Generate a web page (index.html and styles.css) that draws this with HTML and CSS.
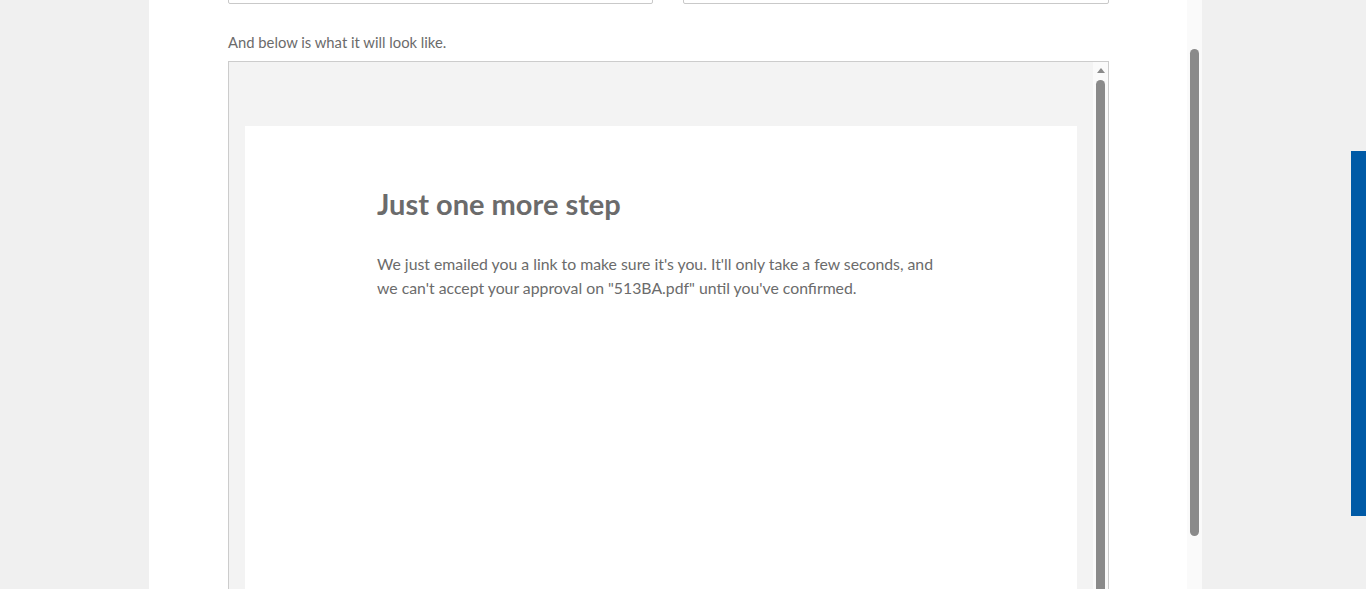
FILE: index.html
```html
<!DOCTYPE html>
<html>
<head>
<meta charset="utf-8">
<link rel="stylesheet" href="styles.css">
</head>
<body>
<div class="viewport">
  <div class="column">
    <div class="page">
      <div class="inputs">
        <div class="field"></div>
        <div class="field field-wide"></div>
      </div>
      <p class="label">And below is what it will look like.</p>
      <div class="preview">
        <div class="preview-body">
          <div class="card">
            <h1 class="title">Just one more step</h1>
            <p class="message">We just emailed you a link to make sure it's you. It'll only take a few seconds, and we can't accept your approval on "513BA.pdf" until you've confirmed.</p>
          </div>
        </div>
        <div class="inner-scroll">
          <div class="arrow-up"></div>
          <div class="inner-thumb"></div>
        </div>
      </div>
    </div>
    <div class="outer-scroll">
      <div class="outer-thumb"></div>
    </div>
  </div>
  <div class="feedback-tab"></div>
</div>
</body>
</html>
```

FILE: styles.css
```css
html, body {
  margin: 0;
  padding: 0;
  height: 100%;
  overflow: hidden;
  background: #f0f0f0;
  font-family: Lato, "Open Sans", sans-serif;
  color: #6e6e6e;
}

.viewport {
  position: relative;
  height: 589px;
  padding-left: 149px;
  display: flex;
}

.column {
  display: flex;
  height: 589px;
  overflow: hidden;
}

.page {
  width: 1038px;
  background: #ffffff;
  padding: 0 78px 0 79px;
  box-sizing: border-box;
  overflow: hidden;
}

.inputs {
  display: flex;
  gap: 30px;
  margin-top: -30px;
}

.field {
  width: 425px;
  height: 34px;
  border: 1px solid #c9c9c9;
  border-radius: 2px;
  box-sizing: border-box;
  background: #fff;
}

.field-wide {
  width: 426px;
}

.label {
  margin: 29px 0 0 0;
  font-size: 14.8px;
  line-height: 18px;
  color: #6b6b6b;
}

.preview {
  margin-top: 10px;
  width: 881px;
  height: 600px;
  border: 1px solid #cccccc;
  box-sizing: border-box;
  display: flex;
  background: #f3f3f3;
}

.preview-body {
  flex: 1;
  padding: 64px 16px 0 16px;
}

.card {
  background: #ffffff;
  height: 100%;
  padding: 60px 0 0 132px;
  box-sizing: border-box;
}

.title {
  margin: 0;
  font-size: 29px;
  line-height: 36px;
  font-weight: 700;
  color: #6b6b6b;
}

.message {
  margin: 30px 0 0 0;
  width: 570px;
  font-size: 15.8px;
  line-height: 24px;
  color: #6b6b6b;
}

.inner-scroll {
  width: 15px;
  background: #fafafa;
  display: flex;
  flex-direction: column;
  align-items: center;
  padding-top: 6px;
  box-sizing: border-box;
}

.arrow-up {
  width: 0;
  height: 0;
  border-left: 4px solid transparent;
  border-right: 4px solid transparent;
  border-bottom: 5px solid #8a8a8a;
}

.inner-thumb {
  margin-top: 7px;
  width: 9px;
  flex: 1;
  background: #8a8a8a;
  border-radius: 5px 5px 0 0;
}

.outer-scroll {
  width: 15px;
  background: #fafafa;
  padding: 49px 3px 0 3px;
  box-sizing: border-box;
}

.outer-thumb {
  width: 9px;
  height: 487px;
  background: #8a8a8a;
  border-radius: 5px;
}

.feedback-tab {
  position: absolute;
  right: 0;
  top: 151px;
  width: 15px;
  height: 365px;
  background: #005aa6;
}
```
